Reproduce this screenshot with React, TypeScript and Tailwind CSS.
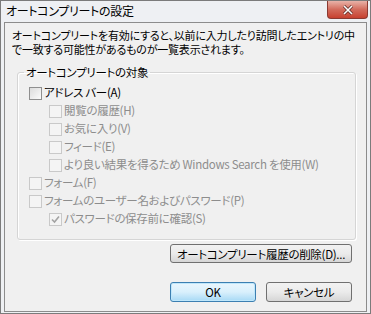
import React from "react";

const font = {
  fontFamily: '"Noto Sans CJK JP", "Noto Sans", sans-serif',
  fontFeatureSettings: '"palt"',
};

function Box({ enabled, checked }: { enabled?: boolean; checked?: boolean }) {
  return (
    <span
      className={
        "relative flex h-[13px] w-[13px] shrink-0 items-center justify-center border " +
        (enabled
          ? "border-[#8f8f8f] bg-gradient-to-br from-[#dcdcdc] to-[#fbfbfb]"
          : "border-[#c9c9c9] bg-[#f4f4f4]")
      }
    >
      {checked && (
        <svg width="9" height="9" viewBox="0 0 9 9">
          <path d="M1 4.5 L3.5 7 L8 1.5" fill="none" stroke="#a3a3a3" strokeWidth="1.6" />
        </svg>
      )}
    </span>
  );
}

type Row = { label: string; level: number; enabled?: boolean; checked?: boolean };

const rows: Row[] = [
  { label: "アドレス バー(A)", level: 0, enabled: true },
  { label: "閲覧の履歴(H)", level: 1 },
  { label: "お気に入り(V)", level: 1 },
  { label: "フィード(E)", level: 1 },
  { label: "より良い結果を得るため Windows Search を使用(W)", level: 1 },
  { label: "フォーム(F)", level: 0 },
  { label: "フォームのユーザー名およびパスワード(P)", level: 0 },
  { label: "パスワードの保存前に確認(S)", level: 1, checked: true },
];

export default function App() {
  return (
    <div
      className="flex h-[314px] w-[371px] flex-col overflow-hidden border border-[#7b7b7b] bg-[#eef0f3] text-[11.5px] tracking-[-0.3px] text-black"
      style={font}
    >
      {/* タイトルバー */}
      <div className="flex h-[21px] shrink-0 items-start justify-between">
        <span className="pl-[5px] pt-[2px] text-[12px] leading-[16px]">オートコンプリートの設定</span>
        <div className="mr-[2px] flex h-[18px] w-[41px] items-center justify-center rounded-b-[4px] border border-t-0 border-[#8a3a32] bg-gradient-to-b from-[#e8b2a8] via-[#d26b5c] to-[#c7402f]">
          <svg width="12" height="10" viewBox="0 0 12 10">
            <path d="M2 1 L10 9 M10 1 L2 9" stroke="#5a2a24" strokeWidth="3" />
            <path d="M2 1 L10 9 M10 1 L2 9" stroke="#ffffff" strokeWidth="1.6" />
          </svg>
        </div>
      </div>

      {/* 本体 */}
      <div className="mx-[3px] mb-[1px] flex flex-1 flex-col border border-[#8c8c8c] bg-[#f0f0f0]">
        <div className="ml-[7px] mt-[5px] flex flex-col whitespace-nowrap text-[11px] leading-[14px] tracking-[-0.2px]">
          <span className="h-[14px]">オートコンプリートを有効にすると、以前に入力したり訪問したエントリの中</span>
          <span className="h-[14px]">で一致する可能性があるものが一覧表示されます。</span>
        </div>

        <fieldset className="ml-[12px] mt-[9px] w-[339px] rounded-[3px] border border-[#d5d5d5] pb-[11px] pt-[5px] shadow-[inset_1px_1px_0_#fff,1px_1px_0_#fff]">
          <legend className="ml-[6px] px-[2px] leading-[14px]">オートコンプリートの対象</legend>
          <div className="flex flex-col">
            {rows.map((row, i) => (
              <div
                key={i}
                className={
                  "flex h-[18px] items-center gap-[2px] " +
                  (row.level === 0 ? "pl-[11px]" : "pl-[31px]")
                }
              >
                <Box enabled={row.enabled} checked={row.checked} />
                <span className={"whitespace-nowrap " + (row.enabled ? "text-black" : "text-[#8d8d8d]")}>
                  {row.label}
                </span>
              </div>
            ))}
          </div>
        </fieldset>

        <div className="mr-[14px] mt-[4px] flex justify-end">
          <button className="h-[19px] w-[182px] rounded-[3px] border border-[#707070] bg-gradient-to-b from-[#f2f2f2] via-[#ebebeb] to-[#d6d6d6] leading-[16px]">
            オートコンプリート履歴の削除(D)...
          </button>
        </div>

        <div className="mr-[14px] mt-[19px] flex justify-end gap-[10px]">
          <button className="h-[20px] w-[86px] rounded-[3px] border border-[#3c7fb1] bg-gradient-to-b from-[#eaf6fd] via-[#d9f0fc] to-[#a7d9f5] leading-[16px] shadow-[inset_0_0_0_1px_#bfe7fb]">
            OK
          </button>
          <button className="h-[20px] w-[86px] rounded-[3px] border border-[#707070] bg-gradient-to-b from-[#f2f2f2] via-[#ebebeb] to-[#d6d6d6] leading-[16px]">
            キャンセル
          </button>
        </div>
      </div>
    </div>
  );
}
